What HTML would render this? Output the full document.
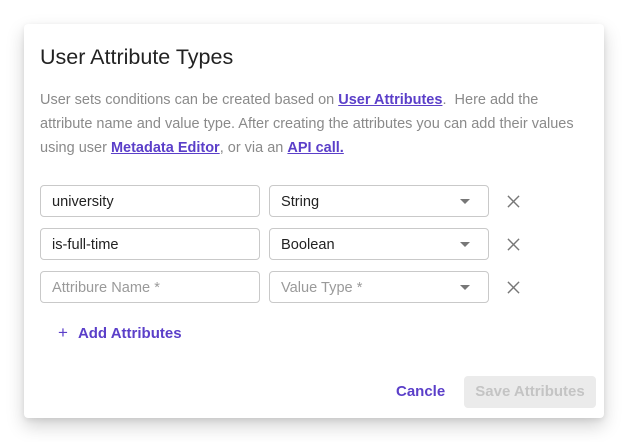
<!DOCTYPE html>
<html><head><style>
*{box-sizing:border-box;margin:0;padding:0}
body{width:628px;height:442px;background:#fff;font-family:"Liberation Sans",sans-serif;position:relative;overflow:hidden}
.card{position:absolute;left:24px;top:24px;width:580px;height:394px;background:#fff;border-radius:4px;box-shadow:0 8px 18px rgba(0,0,0,.18),0 2px 6px rgba(0,0,0,.08)}
.t{position:absolute;left:40px;top:45px;font-size:21.5px;color:#222}
.p{position:absolute;left:40px;top:88px;width:570px;font-size:14.5px;line-height:24px;color:#8a8a8a;white-space:nowrap}
.p a{color:#5b3fc9;font-weight:bold;text-decoration:underline}
.in{position:absolute;height:32px;border:1px solid #c9c9c9;border-radius:4px;font-size:14.6px;line-height:32px;padding-left:11px;color:#222}
.ph{color:#9a9a9a}
.car{position:absolute;right:18px;top:13px;width:0;height:0;border-left:5px solid transparent;border-right:5px solid transparent;border-top:5px solid #777}
.x{position:absolute;left:507px;width:13px;height:13px}
.add{position:absolute;left:58px;top:323px;font-size:15px;font-weight:bold;color:#5b3fc9}
.cancel{position:absolute;left:396px;top:383px;font-size:15px;font-weight:bold;color:#5b3fc9}
.save{position:absolute;left:464px;top:376px;width:132px;height:32px;background:#ebebeb;border-radius:4px;color:#c4c4c4;font-size:15px;font-weight:bold;text-align:center;line-height:32px}
</style></head><body>
<div class="card"></div>
<div class="t">User Attribute Types</div>
<div class="p">User sets conditions can be created based on <a>User Attributes</a>.&nbsp; Here add the<br>attribute name and value type. After creating the attributes you can add their values<br>using user <a>Metadata Editor</a>, or via an <a>API call.</a></div>

<div class="in" style="left:40px;top:185px;width:220px">university</div>
<div class="in" style="left:269px;top:185px;width:220px">String<span class="car"></span></div>
<svg class="x" style="top:195px" viewBox="0 0 14 14"><path d="M1 1L13 13M13 1L1 13" stroke="#777" stroke-width="1.5"/></svg>

<div class="in" style="left:40px;top:228px;width:220px">is-full-time</div>
<div class="in" style="left:269px;top:228px;width:220px">Boolean<span class="car"></span></div>
<svg class="x" style="top:238px" viewBox="0 0 14 14"><path d="M1 1L13 13M13 1L1 13" stroke="#777" stroke-width="1.5"/></svg>

<div class="in ph" style="left:40px;top:271px;width:220px">Attribure Name *</div>
<div class="in ph" style="left:269px;top:271px;width:220px">Value Type *<span class="car"></span></div>
<svg class="x" style="top:281px" viewBox="0 0 14 14"><path d="M1 1L13 13M13 1L1 13" stroke="#777" stroke-width="1.5"/></svg>

<div class="add"><span style="font-weight:normal;font-size:17px;margin-right:10px">+</span>Add Attributes</div>
<div class="cancel">Cancle</div>
<div class="save">Save Attributes</div>
</body></html>
